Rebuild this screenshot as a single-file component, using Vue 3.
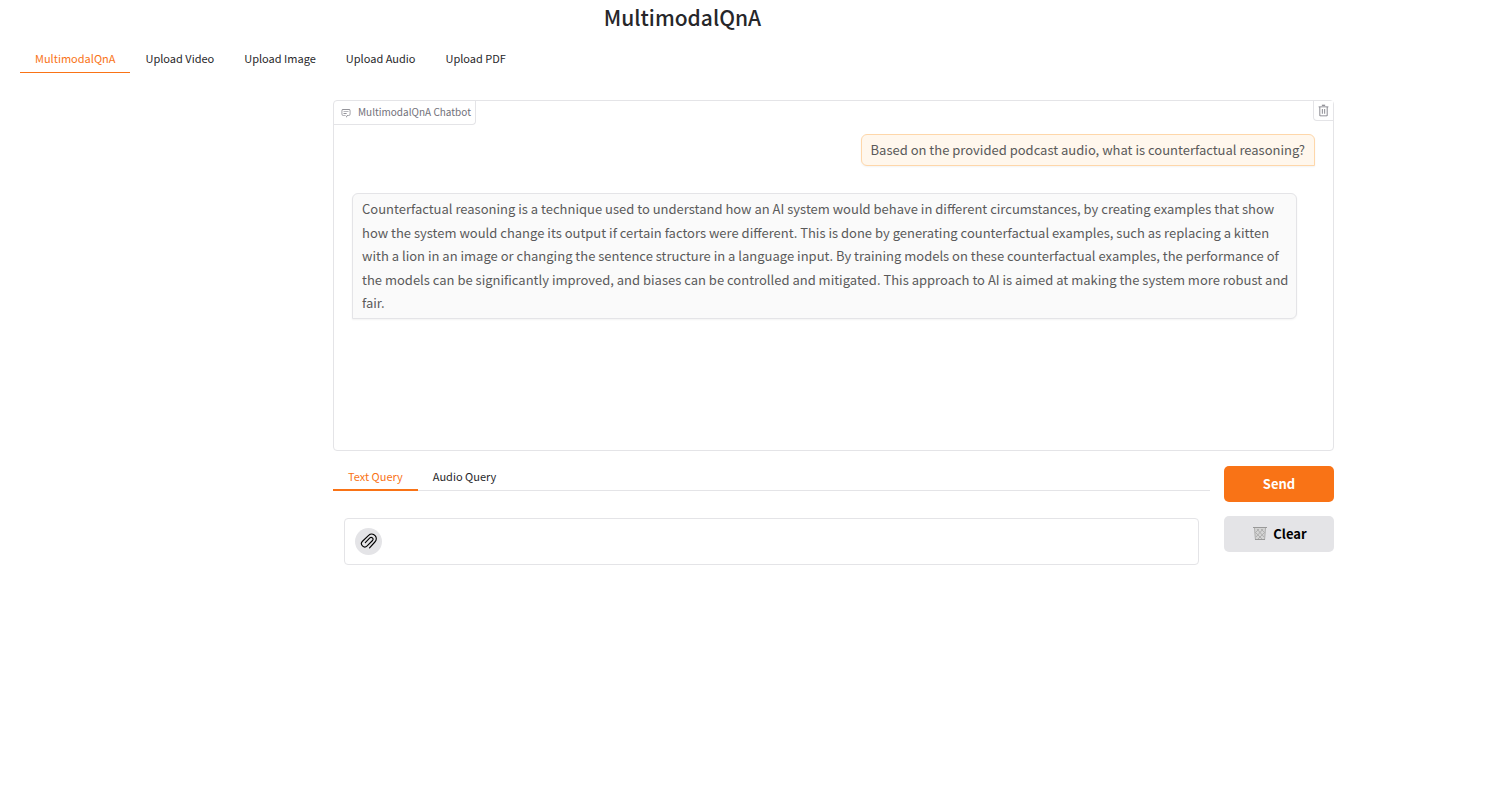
<script setup>
import { ref } from 'vue'

const pages = ['MultimodalQnA', 'Upload Video', 'Upload Image', 'Upload Audio', 'Upload PDF']
const activePage = ref('MultimodalQnA')
const queries = ['Text Query', 'Audio Query']
const activeQuery = ref('Text Query')
const query = ref('')
const messages = [
  { role: 'user', text: 'Based on the provided podcast audio, what is counterfactual reasoning?' },
  {
    role: 'bot',
    text: 'Counterfactual reasoning is a technique used to understand how an AI system would behave in different circumstances, by creating examples that show how the system would change its output if certain factors were different. This is done by generating counterfactual examples, such as replacing a kitten with a lion in an image or changing the sentence structure in a language input. By training models on these counterfactual examples, the performance of the models can be significantly improved, and biases can be controlled and mitigated. This approach to AI is aimed at making the system more robust and fair.',
  },
]
</script>

<template>
  <main class="app">
    <h1>MultimodalQnA</h1>
    <nav class="tabs pages" role="tablist">
      <button
        v-for="p in pages"
        :key="p"
        type="button"
        role="tab"
        :aria-selected="p === activePage"
        :class="{ active: p === activePage }"
        @click="activePage = p"
      >{{ p }}</button>
    </nav>

    <div class="panel">
      <div class="side"></div>
      <div class="content">
        <section class="chat">
          <div class="label">
            <svg width="10" height="10" viewBox="0 0 32 32" aria-hidden="true">
              <path fill="currentColor" d="M17.74 30 16 29l4-7h6a2 2 0 0 0 2-2V8a2 2 0 0 0-2-2H6a2 2 0 0 0-2 2v12a2 2 0 0 0 2 2h9v2H6a4 4 0 0 1-4-4V8a4 4 0 0 1 4-4h20a4 4 0 0 1 4 4v12a4 4 0 0 1-4 4h-4.840Z" />
              <path fill="currentColor" d="M8 10h16v2H8zM8 16h10v2H8z" />
            </svg>
            <span>MultimodalQnA Chatbot</span>
          </div>
          <button type="button" class="trash" aria-label="Clear chat">
            <svg width="13" height="13" viewBox="0 0 32 32" aria-hidden="true">
              <path fill="currentColor" d="M12 12h2v12h-2zM18 12h2v12h-2z" />
              <path fill="currentColor" d="M4 6v2h2v20a2 2 0 0 0 2 2h16a2 2 0 0 0 2-2V8h2V6Zm4 22V8h16v20ZM12 2h8v2h-8z" />
            </svg>
          </button>
          <p v-for="m in messages" :key="m.role" class="message" :class="m.role">{{ m.text }}</p>
        </section>

        <div class="query">
          <div class="ask">
            <div class="tabs queries" role="tablist">
              <button
                v-for="q in queries"
                :key="q"
                type="button"
                role="tab"
                :aria-selected="q === activeQuery"
                :class="{ active: q === activeQuery }"
                @click="activeQuery = q"
              >{{ q }}</button>
            </div>
            <div class="box">
              <button type="button" class="attach" aria-label="Attach file">
                <svg width="17" height="17" viewBox="0 0 24 24" aria-hidden="true">
                  <path
                    fill="none"
                    stroke="currentColor"
                    stroke-width="1.600"
                    stroke-linecap="round"
                    stroke-linejoin="round"
                    d="M13.500 22 21 13.700A6.300 6.300 0 0 0 12.200 4.300L3.500 12.600A4.700 4.700 0 0 0 10.100 19.300L17.700 11.600A2.700 2.700 0 0 0 13.900 7.800L7.500 14.500"
                    transform="translate(0 -1)"
                  />
                </svg>
              </button>
              <input v-model="query" type="text" aria-label="Text query" />
            </div>
          </div>
          <div class="actions">
            <button type="button" class="send">Send</button>
            <button type="button" class="clear">
              <svg width="14" height="15" viewBox="0 0 14 15" aria-hidden="true">
                <path fill="#d4d4d4" d="M1 2h12l-1 12H2z" />
                <path fill="none" stroke="#b0b0b0" d="M1.500 2l1 12M12.500 2l-1 12M4 3l7 8M8 3l4 4M3 7l6 6M10 3l-7 8M6 3L2 7M11 7l-6 6" />
                <path fill="#999" d="M0 1h14v1H0zM2 13h10v1H2z" />
              </svg>
              <span>Clear</span>
            </button>
          </div>
        </div>
      </div>
    </div>
  </main>
</template>

<style>
body {
  background: #fff;
}
</style>

<style scoped>
* {
  box-sizing: border-box;
}
.app {
  margin: 0 164px 0 20px;
  font-family: "Noto Sans CJK SC", "Open Sans", sans-serif;
  font-size: 13px;
  color: #27272a;
}
button {
  font: inherit;
  border: 0;
  margin: 0;
  cursor: pointer;
}
h1 {
  margin: 0;
  padding-top: 1px;
  font-size: 21px;
  line-height: 32px;
  font-weight: 500;
  text-align: center;
}
.tabs {
  display: flex;
}
.tabs button {
  padding: 0 15px 2px;
  background: none;
  color: #27272a;
  font-size: 11px;
  line-height: 20px;
}
.tabs .active {
  color: #f97316;
}
.pages {
  margin-top: 13px;
}
.pages button {
  height: 27px;
  border-bottom: 1px solid transparent;
}
.pages .active {
  border-color: #f97316;
}
.panel {
  display: flex;
  gap: 16px;
  padding: 27px 11px;
}
.side {
  flex: 2 1 0;
}
.content {
  flex: 7 1 0;
  min-width: 0;
}
.chat {
  position: relative;
  display: flex;
  flex-direction: column;
  min-height: 351px;
  padding: 33px 18px;
  border: 1px solid #e4e4e7;
  border-radius: 4px;
}
.label {
  position: absolute;
  top: 0;
  left: 0;
  display: flex;
  align-items: center;
  gap: 7px;
  height: 24px;
  padding: 0 4px 0 7px;
  border: solid #e4e4e7;
  border-width: 0 1px 1px 0;
  border-radius: 0 0 4px 0;
  font-size: 10px;
  line-height: 16px;
  color: #71717a;
}
.label span {
  padding-bottom: 1px;
}
.trash {
  position: absolute;
  top: 0;
  right: 0;
  display: flex;
  align-items: center;
  justify-content: center;
  width: 20px;
  height: 20px;
  padding: 0;
  border: solid #e4e4e7;
  border-width: 0 0 1px 1px;
  border-radius: 0 0 0 4px;
  background: #fff;
  color: #71717a;
}
.message {
  margin: 0;
  padding: 3px 9px 4px;
  border: 1px solid #e4e4e7;
  border-radius: 6px;
  font-size: 13px;
  line-height: 1.8;
  color: #5a5a5a;
  box-shadow: 0 1px 2px rgba(0, 0, 0, 0.05);
}
.user {
  align-self: flex-end;
  background: #fff7ed;
  border-color: #fed7aa;
  border-bottom-right-radius: 0;
}
.bot {
  margin: 27px 18px 0 0;
  padding-right: 6px;
  background: #fafafa;
  border-bottom-left-radius: 0;
}
.query {
  display: flex;
  gap: 14px;
  margin-top: 15px;
}
.ask {
  flex: 1;
  min-width: 0;
}
.queries {
  height: 25px;
  border-bottom: 1px solid #e4e4e7;
}
.queries button {
  height: 25px;
  padding-bottom: 4px;
  border-bottom: 2px solid transparent;
}
.queries .active {
  border-color: #f97316;
}
.box {
  display: flex;
  align-items: center;
  gap: 8px;
  height: 47px;
  margin: 27px 11px 0;
  padding: 0 10px;
  border: 1px solid #e4e4e7;
  border-radius: 4px;
}
.box input {
  flex: 1;
  min-width: 0;
  height: 28px;
  border: 0;
  outline: 0;
  background: none;
  font: inherit;
}
.attach {
  display: flex;
  align-items: center;
  justify-content: center;
  width: 27px;
  height: 27px;
  padding: 0;
  border-radius: 50%;
  background: #e4e4e7;
  color: #000;
}
.actions {
  display: flex;
  flex-direction: column;
  gap: 14px;
  width: 110px;
}
.actions button {
  display: flex;
  align-items: center;
  justify-content: center;
  gap: 6px;
  height: 36px;
  padding: 0 0 2px;
  border-radius: 5px;
  font-size: 13px;
  font-weight: 600;
}
.actions .send {
  background: #f97316;
  color: #fff;
}
.actions .clear {
  padding-left: 2px;
  background: #e4e4e7;
  color: #000;
}
</style>
